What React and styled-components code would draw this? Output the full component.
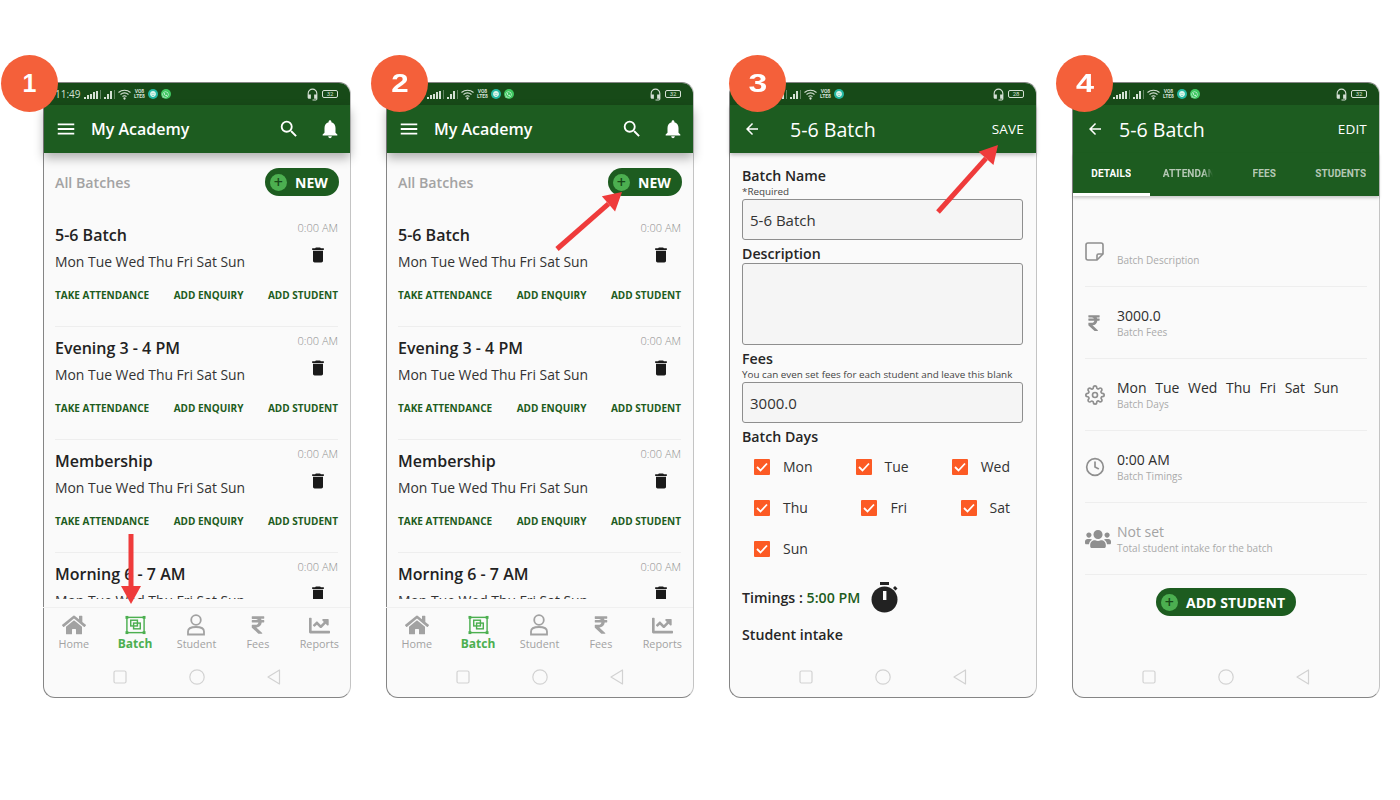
import React from 'react';
import styled, { createGlobalStyle } from 'styled-components';
import { MdMenu, MdSearch, MdNotifications, MdDelete, MdArrowBack, MdHeadsetMic } from 'react-icons/md';
import { FaHome, FaRupeeSign, FaChartLine, FaUsers, FaWhatsapp, FaSmile } from 'react-icons/fa';
import { FiSettings, FiClock } from 'react-icons/fi';

const GREEN = '#1d5c20';
const DARK_GREEN = '#174a18';
const LIGHT_GREEN = '#4caf50';

const GlobalStyle = createGlobalStyle`
  html, body {
    margin: 0;
    background: #fff;
    font-family: "Open Sans", "Liberation Sans", sans-serif;
  }
`;

const Page = styled.div`
  width: 1400px;
  height: 800px;
  box-sizing: border-box;
  padding: 82px 0 0 43px;
  display: flex;
  gap: 35px;
  overflow: hidden;
`;

const Phone = styled.div`
  position: relative;
  width: 308px;
  height: 616px;
  box-sizing: border-box;
  display: flex;
  flex-direction: column;
  background: #fafafa;
  border: 1px solid #858585;
  border-right-color: #c4c4c4;
  border-radius: 12px;
`;

const Badge = styled.div`
  position: absolute;
  top: -28px;
  left: ${p => p.$left}px;
  width: 57px;
  height: 57px;
  border-radius: 50%;
  background: #f4603a;
  color: #fff;
  display: flex;
  align-items: center;
  justify-content: center;
  font-family: "Liberation Sans", sans-serif;
  font-weight: 700;
  font-size: 25px;
  z-index: 5;

  span {
    transform: scaleX(${p => p.$stretch || 1});
  }
`;

const ArrowLayer = styled.svg`
  position: absolute;
  left: -1px;
  top: -1px;
  width: 308px;
  height: 616px;
  overflow: visible;
  pointer-events: none;
  z-index: 4;
`;

const StatusRow = styled.div`
  height: 22px;
  flex: none;
  display: flex;
  align-items: center;
  justify-content: space-between;
  padding: 0 12px 0 11px;
  background: ${DARK_GREEN};
  border-radius: 11px 11px 0 0;
  color: #d5e0d5;
`;

const StatusGroup = styled.div`
  display: flex;
  align-items: center;
  gap: 3px;
`;

const Clock = styled.span`
  font-size: 10px;
  width: 26px;
  white-space: nowrap;
`;

const Volte = styled.span`
  font-family: Roboto, sans-serif;
  font-size: 5px;
  line-height: 5px;
  font-weight: 700;
  text-align: center;
`;

const Dot = styled.span`
  width: 10px;
  height: 10px;
  border-radius: 50%;
  background: ${p => p.$color};
  color: #dff5ea;
  display: flex;
  align-items: center;
  justify-content: center;
`;

const Battery = styled.span`
  width: 16px;
  height: 8px;
  box-sizing: border-box;
  border: 1px solid #d5e0d5;
  border-radius: 2px;
  font-size: 6px;
  line-height: 6px;
  text-align: center;
  font-family: Roboto, sans-serif;
  color: #d5e0d5;
`;

const AppBar = styled.div`
  height: 48px;
  flex: none;
  box-sizing: border-box;
  display: flex;
  align-items: center;
  padding: 0 ${p => p.$right}px 0 ${p => p.$left}px;
  background: ${GREEN};
  color: #fff;
  box-shadow: ${p => p.$shadow || 'none'};
  position: relative;
`;

const AppTitle = styled.div`
  flex: 1;
  font-size: ${p => (p.$plain ? 19.6 : 16)}px;
  font-weight: ${p => (p.$plain ? 400 : 600)};
  margin-left: ${p => p.$gap}px;
`;

const AppAction = styled.div`
  font-size: 13.5px;
  letter-spacing: 0.2px;
`;

const BarIcons = styled.div`
  display: flex;
  align-items: center;
  gap: 19px;
`;

const Main = styled.div`
  flex: 1;
  min-height: 0;
  overflow: hidden;
  margin-bottom: ${p => p.$gap || 0}px;
`;

const ListHead = styled.div`
  display: flex;
  align-items: center;
  justify-content: space-between;
  height: 28px;
  padding: 15px 11px 0 11px;
  margin-bottom: 18px;
`;

const Muted = styled.div`
  font-size: 14.2px;
  font-weight: 600;
  color: #a3a3a3;
`;

const PillButton = styled.div`
  display: inline-flex;
  align-items: center;
  height: 28px;
  box-sizing: border-box;
  padding: 0 ${p => p.$pad}px 0 5px;
  gap: ${p => p.$gap}px;
  background: ${GREEN};
  color: #fff;
  border-radius: 14px;
  font-size: 14px;
  font-weight: 700;
  letter-spacing: 0.1px;
`;

const PlusDot = styled.span`
  width: 17px;
  height: 17px;
  border-radius: 50%;
  background: ${LIGHT_GREEN};
  color: ${DARK_GREEN};
  font-size: 16px;
  font-weight: 600;
  line-height: 16px;
  text-align: center;
`;

const Batch = styled.div`
  margin: 0 12px 0 11px;
  height: 113px;
  box-sizing: border-box;
  border-bottom: 1px solid #eee;
  position: relative;
  padding-top: 8px;
`;

const BatchTop = styled.div`
  display: flex;
  justify-content: space-between;
  height: 55px;
`;

const BatchTitle = styled.div`
  font-size: 16px;
  font-weight: 600;
  color: #222;
  line-height: 22px;
  margin-top: 2px;
`;

const BatchDays = styled.div`
  font-size: 13.9px;
  color: #333;
  line-height: 20px;
  margin-top: 6px;
`;

const BatchSide = styled.div`
  display: flex;
  flex-direction: column;
  align-items: flex-end;
  font-size: 11px;
  font-weight: 300;
  color: #8d8d8d;
  margin-top: -2px;
  line-height: 16px;

  svg {
    margin: 9px 10px 0 0;
    color: #1a1a1a;
  }
`;

const BatchLinks = styled.div`
  display: flex;
  justify-content: space-between;
  margin-top: 11px;
  font-size: 10px;
  font-weight: 700;
  color: ${GREEN};
`;

const Nav = styled.div`
  height: 54px;
  flex: none;
  box-sizing: border-box;
  border-top: 1px solid #f0f0f0;
  display: grid;
  grid-template-columns: repeat(5, 1fr);
  padding: 6px 0 0;
  margin: 0 0 0 -1px;
`;

const NavItem = styled.div`
  display: flex;
  flex-direction: column;
  align-items: center;
  color: ${p => (p.$active ? LIGHT_GREEN : '#a2a2a2')};
  font-size: ${p => (p.$active ? 12 : 10.8)}px;
  line-height: 15px;
  font-weight: ${p => (p.$active ? 700 : 400)};
`;

const NavIcon = styled.div`
  height: 22px;
  display: flex;
  align-items: center;
`;

const SystemBar = styled.div`
  height: 36px;
  flex: none;
  display: flex;
  align-items: center;
  justify-content: center;
  gap: 62px;
  padding-bottom: 4px;
  box-sizing: border-box;
  color: #d2d2d2;
`;

const Form = styled.div`
  padding: 14px 13px 0 12px;
`;

const FormLabel = styled.div`
  font-size: 14.2px;
  font-weight: 600;
  color: #262626;
  line-height: 18px;
  margin-top: ${p => p.$top || 0}px;
`;

const FormHint = styled.div`
  font-size: 9.85px;
  color: #444;
  line-height: 13px;
  margin-bottom: 1px;
`;

const Field = styled.div`
  height: ${p => p.$height}px;
  box-sizing: border-box;
  margin-top: ${p => p.$top || 0}px;
  border: 1px solid #8e8e8e;
  border-radius: 3px;
  background: #f5f5f5;
  padding: 0 0 0 7px;
  display: flex;
  align-items: center;
  font-size: 15px;
  color: #333;
`;

const CheckRow = styled.div`
  display: flex;
  justify-content: space-between;
  align-items: center;
  height: 41px;
  padding: 0 13px 0 12px;
`;

const Check = styled.div`
  display: flex;
  align-items: center;
  gap: 13px;
  font-size: 14px;
  color: #333;
`;

const Box = styled.span`
  width: 16px;
  height: 16px;
  background: #fc5a24;
  border-radius: 1px;
  display: flex;
  align-items: center;
  justify-content: center;
`;

const Timing = styled.div`
  display: flex;
  align-items: center;
  margin-top: 13px;
  font-size: 14.2px;
  font-weight: 600;
  color: #262626;
  gap: 11px;

  b {
    font-weight: 600;
    color: ${GREEN};
  }
`;

const Tabs = styled.div`
  flex: none;
  height: 43px;
  display: grid;
  grid-template-columns: repeat(4, 1fr);
  background: ${GREEN};
  box-shadow: 0 2px 3px rgba(0, 0, 0, 0.2);
  position: relative;
`;

const Tab = styled.div`
  display: flex;
  justify-content: center;
  padding-top: 15px;
  box-sizing: border-box;
  height: 43px;
  font-family: Roboto, sans-serif;
  font-size: 10px;
  font-weight: 700;
  letter-spacing: 0.1px;
  color: ${p => (p.$active ? '#fff' : '#b5c8b5')};
  border-bottom: 3px solid ${p => (p.$active ? '#fff' : 'transparent')};

  span {
    white-space: nowrap;
    max-width: ${p => (p.$clip ? '50px' : 'none')};
    overflow: hidden;
    height: 14px;
    -webkit-mask-image: ${p => (p.$clip ? 'linear-gradient(90deg, #000 80%, transparent)' : 'none')};
  }
`;

const DetailList = styled.div`
  padding: 19px 12px 0 12px;
`;

const DetailRow = styled.div`
  height: 72px;
  box-sizing: border-box;
  border-bottom: 1px solid #eee;
  display: flex;
  align-items: center;
  padding-top: 1px;
`;

const DetailIcon = styled.div`
  width: 32px;
  flex: none;
  display: flex;
  color: #8f8f8f;
`;

const DetailValue = styled.div`
  font-size: 14px;
  line-height: 18px;
  color: ${p => (p.$muted ? '#a3a3a3' : '#2e2e2e')};
  word-spacing: ${p => p.$spread || 0}px;
`;

const DetailSub = styled.div`
  font-size: 10px;
  line-height: 14px;
  color: #aaa;
  margin-top: ${p => p.$top || 0}px;
`;

const Center = styled.div`
  display: flex;
  justify-content: center;
  margin-top: 13px;
`;

function Signal({ bars }) {
  const width = bars * 3 + 2;
  return (
    <svg width={width} height="9" viewBox={`0 0 ${width} 9`} fill="currentColor">
      {[...Array(bars)].map((_, i) => {
        const h = 2 + Math.round((i * 6) / (bars - 1));
        return <rect key={i} x={i * 3} y={9 - h} width="2" height={h} />;
      })}
      <rect x={width - 1} y="0" width="1" height="9" opacity="0.4" />
    </svg>
  );
}

function Wifi() {
  return (
    <svg width="13" height="11" viewBox="0 0 13 11" fill="none" stroke="currentColor" strokeWidth="1.1">
      <path d="M0.5 3.5 C4 0.5 9 0.5 12.5 3.5" />
      <path d="M2.5 5.5 C5 3.5 8 3.5 10.5 5.5" />
      <path d="M4.5 7.5 C5.7 6.6 7.3 6.6 8.5 7.5" />
      <circle cx="6.5" cy="9.5" r="0.6" fill="currentColor" />
    </svg>
  );
}

function StatusBar({ time, battery, whatsapp = true }) {
  return (
    <StatusRow>
      <StatusGroup>
        <Clock>{time}</Clock>
        <Signal bars={5} />
        <Signal bars={3} />
        <Wifi />
        <Volte>
          VO8
          <br />
          LTE8
        </Volte>
        <Dot $color="#25b9a4"><FaSmile size={6} /></Dot>
        {whatsapp && <Dot $color="#3fc860"><FaWhatsapp size={7} /></Dot>}
      </StatusGroup>
      <StatusGroup>
        <MdHeadsetMic size={13} />
        <Battery>{battery}</Battery>
      </StatusGroup>
    </StatusRow>
  );
}

function Arrow({ from, to }) {
  const [x1, y1] = from;
  const [x2, y2] = to;
  const len = Math.hypot(x2 - x1, y2 - y1);
  const ux = (x2 - x1) / len;
  const uy = (y2 - y1) / len;
  const bx = x2 - ux * 18;
  const by = y2 - uy * 18;
  const head = `${x2},${y2} ${bx - uy * 10},${by + ux * 10} ${bx + uy * 10},${by - ux * 10}`;
  return (
    <ArrowLayer viewBox="0 0 308 616">
      <line x1={x1} y1={y1} x2={bx} y2={by} stroke="#ef3b3b" strokeWidth="5" />
      <polygon points={head} fill="#ef3b3b" />
    </ArrowLayer>
  );
}

function BatchIcon() {
  return (
    <svg width="21" height="20" viewBox="0 0 22 20" fill="none" stroke={LIGHT_GREEN} strokeWidth="1.5">
      <rect x="2" y="2" width="18" height="16" />
      <rect x="6" y="5" width="7" height="6" />
      <rect x="9" y="8" width="7" height="6" />
      <g fill={LIGHT_GREEN} stroke="none">
        <rect x="0.5" y="0.5" width="3" height="3" />
        <rect x="18.5" y="0.5" width="3" height="3" />
        <rect x="0.5" y="16.5" width="3" height="3" />
        <rect x="18.5" y="16.5" width="3" height="3" />
      </g>
    </svg>
  );
}

function StudentIcon() {
  return (
    <svg width="20" height="22" viewBox="0 0 20 22" fill="none" stroke="currentColor" strokeWidth="1.8">
      <circle cx="10" cy="6" r="4.8" />
      <path d="M2 20.5 V17.5 C2 14.5 5 13 10 13 C15 13 18 14.5 18 17.5 V20.5 Z" />
    </svg>
  );
}

function NoteIcon() {
  return (
    <svg width="19" height="19" viewBox="0 0 19 19" fill="none" stroke="currentColor" strokeWidth="1.6">
      <path d="M12 18 H3 A2 2 0 0 1 1 16 V3 A2 2 0 0 1 3 1 H16 A2 2 0 0 1 18 3 V12 Z" />
      <path d="M12 18 V13.5 A1.5 1.5 0 0 1 13.5 12 H18" />
    </svg>
  );
}

function StopwatchIcon() {
  return (
    <svg width="27" height="31" viewBox="0 0 27 31" fill="#222">
      <rect x="9" y="0" width="9" height="3" />
      <circle cx="13.5" cy="17.5" r="13" />
      <path d="M22 6 l2 -2 l2.5 2.5 l-2 2 z" />
      <rect x="12" y="9" width="3.4" height="9" fill="#fafafa" />
    </svg>
  );
}

function CheckMark() {
  return (
    <svg width="12" height="10" viewBox="0 0 12 10" fill="none" stroke="#fff" strokeWidth="1.8">
      <path d="M1 5 L4.5 8.5 L11 1.5" />
    </svg>
  );
}

function SystemKeys() {
  return (
    <SystemBar>
      <svg width="14" height="14" viewBox="0 0 14 14" fill="none" stroke="currentColor" strokeWidth="1.2">
        <rect x="1" y="1" width="12" height="12" rx="1.5" />
      </svg>
      <svg width="16" height="16" viewBox="0 0 16 16" fill="none" stroke="currentColor" strokeWidth="1.2">
        <circle cx="8" cy="8" r="7.2" />
      </svg>
      <svg width="14" height="16" viewBox="0 0 14 16" fill="none" stroke="currentColor" strokeWidth="1.2">
        <path d="M12.5 1 V15 L1 8 Z" strokeLinejoin="round" />
      </svg>
    </SystemBar>
  );
}

const BATCHES = ['5-6 Batch', 'Evening 3 - 4 PM', 'Membership', 'Morning 6 - 7 AM'];
const NAV_ITEMS = [
  { label: 'Home', icon: <FaHome size={24} /> },
  { label: 'Batch', icon: <BatchIcon />, active: true },
  { label: 'Student', icon: <StudentIcon /> },
  { label: 'Fees', icon: <FaRupeeSign size={20} /> },
  { label: 'Reports', icon: <FaChartLine size={21} /> },
];
const DAY_ROWS = [
  ['Mon', 'Tue', 'Wed'],
  ['Thu', 'Fri', 'Sat'],
  ['Sun'],
];

function BatchList() {
  return (
    <>
      <AppBar $left={11} $right={9} $shadow="0 5px 10px rgba(0, 0, 0, 0.3)">
        <MdMenu size={22} />
        <AppTitle $gap={14}>My Academy</AppTitle>
        <BarIcons>
          <MdSearch size={22} />
          <MdNotifications size={22} />
        </BarIcons>
      </AppBar>
      <Main $gap={8}>
        <ListHead>
          <Muted>All Batches</Muted>
          <PillButton $pad={11} $gap={8}>
            <PlusDot>+</PlusDot>
            NEW
          </PillButton>
        </ListHead>
        {BATCHES.map((name, i) => (
          <Batch key={name}>
            <BatchTop>
              <div>
                <BatchTitle>{name}</BatchTitle>
                <BatchDays>Mon Tue Wed Thu Fri Sat Sun</BatchDays>
              </div>
              <BatchSide>
                0:00 AM
                <MdDelete size={20} />
              </BatchSide>
            </BatchTop>
            {i < 3 && (
              <BatchLinks>
                <span>TAKE ATTENDANCE</span>
                <span>ADD ENQUIRY</span>
                <span>ADD STUDENT</span>
              </BatchLinks>
            )}
          </Batch>
        ))}
      </Main>
      <Nav>
        {NAV_ITEMS.map(item => (
          <NavItem key={item.label} $active={item.active}>
            <NavIcon>{item.icon}</NavIcon>
            {item.label}
          </NavItem>
        ))}
      </Nav>
      <SystemKeys />
    </>
  );
}

function EditForm() {
  return (
    <>
      <AppBar $left={13} $right={12} $shadow="0 2px 4px rgba(0, 0, 0, 0.25)">
        <MdArrowBack size={18} />
        <AppTitle $plain $gap={29}>5-6 Batch</AppTitle>
        <AppAction>SAVE</AppAction>
      </AppBar>
      <Main>
        <Form>
          <FormLabel>Batch Name</FormLabel>
          <FormHint>*Required</FormHint>
          <Field $height={41}>5-6 Batch</Field>
          <FormLabel $top={5}>Description</FormLabel>
          <Field $height={82} />
          <FormLabel $top={5}>Fees</FormLabel>
          <FormHint>You can even set fees for each student and leave this blank</FormHint>
          <Field $height={41}>3000.0</Field>
          <FormLabel $top={5}>Batch Days</FormLabel>
          {DAY_ROWS.map(days => (
            <CheckRow key={days[0]}>
              {days.map(day => (
                <Check key={day}>
                  <Box>
                    <CheckMark />
                  </Box>
                  {day}
                </Check>
              ))}
            </CheckRow>
          ))}
          <Timing>
            <span>
              Timings : <b>5:00 PM</b>
            </span>
            <StopwatchIcon />
          </Timing>
          <FormLabel $top={13}>Student intake</FormLabel>
        </Form>
      </Main>
      <SystemKeys />
    </>
  );
}

function BatchDetails() {
  return (
    <>
      <AppBar $left={13} $right={12}>
        <MdArrowBack size={18} />
        <AppTitle $plain $gap={15}>5-6 Batch</AppTitle>
        <AppAction>EDIT</AppAction>
      </AppBar>
      <Tabs>
        <Tab $active><span>DETAILS</span></Tab>
        <Tab $clip><span>ATTENDANCE</span></Tab>
        <Tab><span>FEES</span></Tab>
        <Tab><span>STUDENTS</span></Tab>
      </Tabs>
      <Main>
        <DetailList>
          <DetailRow>
            <DetailIcon><NoteIcon /></DetailIcon>
            <DetailSub $top={18}>Batch Description</DetailSub>
          </DetailRow>
          <DetailRow>
            <DetailIcon><FaRupeeSign size={18} /></DetailIcon>
            <div>
              <DetailValue>3000.0</DetailValue>
              <DetailSub>Batch Fees</DetailSub>
            </div>
          </DetailRow>
          <DetailRow>
            <DetailIcon><FiSettings size={20} /></DetailIcon>
            <div>
              <DetailValue $spread={5}>Mon Tue Wed Thu Fri Sat Sun</DetailValue>
              <DetailSub>Batch Days</DetailSub>
            </div>
          </DetailRow>
          <DetailRow>
            <DetailIcon><FiClock size={20} /></DetailIcon>
            <div>
              <DetailValue>0:00 AM</DetailValue>
              <DetailSub>Batch Timings</DetailSub>
            </div>
          </DetailRow>
          <DetailRow>
            <DetailIcon><FaUsers size={26} /></DetailIcon>
            <div>
              <DetailValue $muted>Not set</DetailValue>
              <DetailSub>Total student intake for the batch</DetailSub>
            </div>
          </DetailRow>
          <Center>
            <PillButton $pad={11} $gap={8}>
              <PlusDot>+</PlusDot>
              ADD STUDENT
            </PillButton>
          </Center>
        </DetailList>
      </Main>
      <SystemKeys />
    </>
  );
}

export default function App() {
  return (
    <>
      <GlobalStyle />
      <Page>
        <Phone>
          <Badge $left={-43}><span>1</span></Badge>
          <StatusBar time="11:49" battery="32" />
          <BatchList />
          <Arrow from={[88, 452]} to={[88, 522]} />
        </Phone>
        <Phone>
          <Badge $left={-16} $stretch={1.25}><span>2</span></Badge>
          <StatusBar battery="32" />
          <BatchList />
          <Arrow from={[171, 167]} to={[236, 110]} />
        </Phone>
        <Phone>
          <Badge $left={-1} $stretch={1.35}><span>3</span></Badge>
          <StatusBar battery="28" whatsapp={false} />
          <EditForm />
          <Arrow from={[209, 130]} to={[269, 63]} />
        </Phone>
        <Phone>
          <Badge $left={-17} $stretch={1.3}><span>4</span></Badge>
          <StatusBar battery="32" />
          <BatchDetails />
        </Phone>
      </Page>
    </>
  );
}
